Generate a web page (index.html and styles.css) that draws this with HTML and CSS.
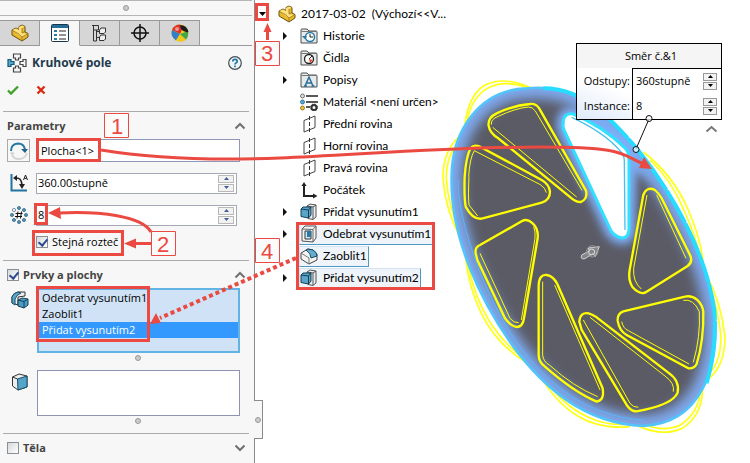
FILE: index.html
```html
<!DOCTYPE html>
<html lang="cs">
<head>
<meta charset="utf-8">
<title>Kruhové pole</title>
<link rel="stylesheet" href="styles.css">
</head>
<body>
<svg class="defs" aria-hidden="true">
  <defs>
    <symbol id="part" viewBox="0 0 18 18">
      <path d="M1 6 5 4 8 5.500V2.500L11 1l3 1.500V8l3 1.500V13l-6 4L1 11z" fill="#e9b92c" stroke="#6d5312" stroke-linejoin="round"/>
      <path d="M1.500 6 5 4.500 8 6V3L11 1.500l2.500 1L11 4v5l5.500 1-5.500 3L8 11z" fill="#ffe07a"/>
      <path d="M11 4v5l3-1.500M1.500 6.500 8 10l3 3v3.500M11 13l5.500-3" fill="none" stroke="#8d6d1c" stroke-width=".7"/>
    </symbol>
    <symbol id="extrude" viewBox="0 0 18 18">
      <path d="M7 3 10 1l6 1v12l-3 2.500-5-1z" fill="#eceded" stroke="#555"/>
      <path d="M13 4v12M7 3l6 1 3-2" fill="none" stroke="#555"/>
      <path d="M1 6l2-2h8v8l-2.500 3L1 13.500z" fill="#5ba4c8" stroke="#123f57"/>
      <path d="M1 6l7.500 1L11 4M8.500 7v8" fill="none" stroke="#123f57"/>
    </symbol>
    <symbol id="cut" viewBox="0 0 18 18">
      <path d="M2 4 5 1h11v12l-3 4-11-1z" fill="#f4f4f4" stroke="#555"/>
      <path d="M2 4l11 .5L16 1M13 4.500V17" fill="none" stroke="#666"/>
      <path d="M5 6h6v8H5z" fill="#d5e8f2" stroke="#333"/><path d="M7 6h4v6H7z" fill="#247ba8"/>
    </symbol>
    <symbol id="fillet" viewBox="0 0 18 18">
      <path d="M1 6 8 2l5 1 4 4v6l-8 4-8-5z" fill="#f3f3f3" stroke="#444" stroke-linejoin="round"/>
      <path d="M6 3l2-1 5 1q4 2 4 6l-6 2q0-5-5-8z" fill="#65acd0" stroke="#184860"/>
      <path d="M1 6l8 5v6" fill="none" stroke="#777"/>
    </symbol>
    <symbol id="plane" viewBox="0 0 18 18">
      <path d="M4 5.500 15 1v11.500L4 17z" fill="#fff" stroke="#444"/><path d="M9.500 1v16" stroke="#333" stroke-dasharray="4 2"/>
    </symbol>
    <symbol id="folder" viewBox="0 0 18 18">
      <path d="M1 16V3q0-1 1-1h5l2 2h7q1 0 1 1v11z" fill="#e7e9eb" stroke="#4a4f52"/><path d="M1.500 4.500h15" stroke="#777"/>
    </symbol>
    <symbol id="up" viewBox="0 0 12 8"><path d="M1.500 6.500 6 2l4.500 4.500" fill="none" stroke="#707070" stroke-width="2"/></symbol>
    <symbol id="down" viewBox="0 0 12 8"><path d="M1.500 1.500 6 6l4.500-4.500" fill="none" stroke="#707070" stroke-width="2"/></symbol>
    <symbol id="right" viewBox="0 0 6 8"><path d="M1 0 5 4 1 8z" fill="#111"/></symbol>
    <symbol id="tri-up" viewBox="0 0 5 3"><path d="M0 3 2.500 0 5 3z" fill="currentColor"/></symbol>
    <symbol id="tri-down" viewBox="0 0 5 3"><path d="M0 0h5L2.500 3z" fill="currentColor"/></symbol>
  </defs>
</svg>

<div class="app">
  <aside class="panel">
    <div class="grip"><i class="dot"></i></div>
    <nav class="tabs">
      <button class="tab" aria-label="Strom"><svg width="18" height="18"><use href="#part"/></svg></button>
      <button class="tab tab-active" aria-label="Vlastnosti"><svg width="18" height="18" viewBox="0 0 18 18"><rect x=".5" y=".5" width="17" height="17" rx="1" fill="#fff" stroke="#17364a"/><path d="M1 1h16v3H1z" fill="#256d96"/><path d="M3 6h3v2H3zM3 10h3v2H3zM3 14h3v2H3z" fill="#2b7aa5"/><path d="M8 7h7M8 11h7M8 15h7" stroke="#222"/></svg></button>
      <button class="tab" aria-label="Konfigurace"><svg width="18" height="18" viewBox="0 0 18 18"><path d="M2.500 1v16M5.500 6v11M2.500 17h3M1 1.500h6.500V6H3" fill="none" stroke="#333"/><path d="M5.500 7.500H9M5.500 13.500H9" stroke="#333"/><path d="M8.500 6l1.500-2h4.500v4L13 9.500H8.500zM8.500 13l1.500-2h4.500v4L13 16.500H8.500z" fill="#eee" stroke="#333"/></svg></button>
      <button class="tab" aria-label="Kóty"><svg width="18" height="18" viewBox="0 0 18 18"><circle cx="9" cy="9" r="6" fill="none" stroke="#111" stroke-width="1.500"/><path d="M9 0v18M0 9h18" stroke="#111" stroke-width="1.500"/></svg></button>
      <button class="tab" aria-label="Vzhled"><svg width="18" height="18" viewBox="0 0 18 18"><circle cx="9" cy="9" r="8.500" fill="#f5d22a"/><path d="M9 10 1 6A8.500 8.500 0 0 1 9 .5q4 4 0 9.500z" fill="#dc3326"/><path d="M9 10 1 6q-2 6 4 10.500z" fill="#317fc7"/><path d="M9 10 5 16.500q7 3 10.500-1.500z" fill="#f0c71e"/><path d="M9 10Q15 8 17 7q1 5-2 8.500z" fill="#43a747"/><path d="M9 1q7 0 8.500 7Q13 9 10 5z" fill="#1b1b1b"/><circle cx="6" cy="5" r="2" fill="#fff" opacity=".5"/></svg></button>
    </nav>

    <header class="title">
      <svg width="20" height="20" viewBox="0 0 20 20" fill="#f7f7f7" stroke="#444" stroke-width="1.200"><path d="M6.500 1h7v4h-2v2h-3V5h-2zM6.500 19h7v-4h-2v-2h-3v2h-2zM19 6.500v7h-3v-2h-3v-3h3v-2z"/><path d="M1 6.500h3v2h3v3H4v2H1z" fill="#57a7cc" stroke="#155777"/></svg>
      <h1>Kruhové pole</h1>
      <button class="plain help" aria-label="Nápověda"><svg width="14" height="14" viewBox="0 0 14 14"><circle cx="7" cy="7" r="6.300" fill="#eef5f9" stroke="#454d53" stroke-width="1.200"/><path d="M4.800 5.500q0-2.200 2.200-2.200t2.200 1.900q0 1.200-1.200 1.800-1 .5-1 1.500M7 9.500v1.700" fill="none" stroke="#2374a0" stroke-width="1.700"/></svg></button>
    </header>
    <div class="confirm">
      <button class="plain" aria-label="OK"><svg width="12" height="10" viewBox="0 0 12 10"><path d="M1 5.500 4 8.500 11 1.500" fill="none" stroke="#3fa32b" stroke-width="2.400"/></svg></button>
      <button class="plain" aria-label="Zrušit"><svg width="10" height="10" viewBox="0 0 10 10"><path d="M1.500 1.500 8.500 8.500M8.500 1.500 1.500 8.500" stroke="#d92b10" stroke-width="2.400"/></svg></button>
    </div>

    <section class="group params">
      <div class="group-head"><h2>Parametry</h2><button class="plain" aria-label="Sbalit parametry"><svg width="12" height="8"><use href="#up"/></svg></button></div>
      <div class="row">
        <button class="axis" aria-label="Obrátit směr"><svg width="18" height="18" viewBox="0 0 18 18"><path d="M1 9q0-7 7-7.500 6 0 7 6" fill="none" stroke="#2677a1" stroke-width="2"/><path d="M11 7h7l-3 4z" fill="#1f6187"/><path d="M17 11q-2 6-8 6-6 0-7-5" fill="none" stroke="#d5d5d5" stroke-width="2"/><path d="M0 12h5l-3-3z" fill="#d5d5d5"/></svg></button>
        <div class="field field-wide"><input aria-label="Osa pole" value="Plocha&lt;1&gt;"></div>
      </div>
      <div class="row">
        <span class="ico"><svg width="18" height="18" viewBox="0 0 18 18"><path d="M1.500 0v16.500H17" fill="none" stroke="#2173a0" stroke-width="2"/><path d="M5 4q7-1 7 8" fill="none" stroke="#222" stroke-width="1.500"/><path d="M3 4l4-3v6zM9 10h6l-3 5z" fill="#222"/><path d="M13.500 6 15.500 1l2 5M14.500 4.500h2" fill="none" stroke="#222"/></svg></span>
        <div class="field"><input aria-label="Úhel" value="360.00stupně"><span class="spin"><button aria-label="Více"><svg width="5" height="3"><use href="#tri-up"/></svg></button><button aria-label="Méně"><svg width="5" height="3"><use href="#tri-down"/></svg></button></span></div>
      </div>
      <div class="row">
        <span class="ico"><svg width="18" height="18" viewBox="0 0 18 18" fill="#4d93b7" stroke="#1c526f" stroke-width=".6"><circle cx="9" cy="2" r="1.600"/><circle cx="14" cy="4" r="1.600"/><circle cx="16" cy="9" r="1.600"/><circle cx="14" cy="14" r="1.600"/><circle cx="9" cy="16" r="1.600"/><circle cx="4" cy="14" r="1.600"/><circle cx="2" cy="9" r="1.600"/><circle cx="4" cy="4" r="1.600" fill="#fff"/><path d="M8 5.500 7 12.500M11.500 5.500l-1 7M5.500 7.500h7M5 10.500h7" stroke="#111" stroke-width="1"/></svg></span>
        <div class="field"><input aria-label="Počet instancí" value="8"><span class="spin"><button aria-label="Více"><svg width="5" height="3"><use href="#tri-up"/></svg></button><button aria-label="Méně"><svg width="5" height="3"><use href="#tri-down"/></svg></button></span></div>
      </div>
      <label class="check indent"><input type="checkbox" checked>Stejná rozteč</label>
    </section>

    <section class="group features">
      <div class="group-head"><h2><label class="check"><input type="checkbox" checked>Prvky a plochy</label></h2><button class="plain" aria-label="Sbalit prvky"><svg width="12" height="8"><use href="#up"/></svg></button></div>
      <div class="row row-top">
        <span class="ico"><svg width="18" height="18" viewBox="0 0 18 18"><path d="M1 12V6q1-4 6-5h7v4l-7 1v8z" fill="#eee" stroke="#333"/><path d="M1 6q1-4 6-5l3 1Q5 4 4 8v6l-3-2z" fill="#5da7ca" stroke="#174c66"/><path d="M7 9l4-2 6 1v6l-4 3-6-2z" fill="#4c9bc2" stroke="#133f57"/><path d="M7 9l6 1.500L17 8M13 10.500V17" fill="none" stroke="#133f57"/></svg></span>
        <ul class="list list-active" role="listbox" aria-label="Prvky">
          <li role="option">Odebrat vysunutím1</li>
          <li role="option">Zaoblit1</li>
          <li role="option" aria-selected="true" class="sel">Přidat vysunutím2</li>
        </ul>
      </div>
      <i class="dot"></i>
      <div class="row row-top">
        <span class="ico"><svg width="18" height="18" viewBox="0 0 18 18"><path d="M1.500 4 8 1l8 2v11l-9 3-5.500-4z" fill="#eee" stroke="#333" stroke-linejoin="round"/><path d="M6.500 6 16 3v11l-9 3z" fill="#55a5ca" stroke="#174d68"/><path d="M1.500 4l5 2" stroke="#333"/></svg></span>
        <ul class="list list-empty" role="listbox" aria-label="Plochy"></ul>
      </div>
      <i class="dot"></i>
    </section>

    <section class="group bodies">
      <div class="group-head"><h2><label class="check"><input type="checkbox">Těla</label></h2><button class="plain" aria-label="Rozbalit těla"><svg width="12" height="8"><use href="#down"/></svg></button></div>
    </section>
    <button class="handle" aria-label="Skrýt panel"><i class="dot"></i></button>
  </aside>

  <main class="view">
    <svg class="model" width="750" height="463" viewBox="0 0 750 463" aria-hidden="true">
      <defs>
        <filter id="blur" x="-20%" y="-20%" width="140%" height="140%"><feGaussianBlur stdDeviation="18"/></filter>
        <filter id="blur-s" x="-40%" y="-40%" width="180%" height="180%"><feGaussianBlur stdDeviation="12"/></filter>
        <path id="rim" d="M65 320C66 180 150 60 290 55C430 40 520 120 620 235C740 385 830 560 853 720C870 900 810 1060 640 1068C460 1060 340 950 250 830C150 690 60 500 65 320z"/>
        <path id="rim-bright" d="M340 55C450 55 520 120 620 235C740 385 830 560 853 720Q862 830 830 940"/>
        <clipPath id="disc"><use href="#rim"/></clipPath>
        <path id="slot" d="M400 155Q402 128 430 132Q520 170 583 232Q597 245 597 265V480Q594 504 577 504Q558 502 543 483L402 180Q397 170 400 155z"/>
      </defs>
      <g transform="translate(430 70) scale(.3333)" fill="none" stroke-linejoin="round">
        <g stroke="#ffff14" stroke-width="5">
          <path d="M105 162Q115 80 160 48Q220 15 305 55M92 197Q38 240 39 325Q45 420 95 510M105 545Q115 670 175 768Q220 835 285 875M328 912Q385 1015 470 1052Q530 1077 600 1070M628 1070Q700 1100 755 1076Q815 1040 818 960M833 928Q885 890 885 800Q875 700 828 612M640 246Q730 315 775 420Q812 505 820 578"/>
          <path d="M112 150Q125 85 170 56Q220 28 290 52M88 215Q49 255 49 325Q55 415 97 500M112 570Q130 680 186 766Q230 830 285 868M345 925Q395 1005 475 1042Q530 1067 585 1063M640 1062Q700 1088 750 1066Q805 1030 811 965M835 912Q872 880 873 800Q865 715 835 640M660 270Q725 330 763 423Q800 505 809 560"/>
        </g>
        <g clip-path="url(#disc)">
          <use href="#rim" fill="#5b5b66"/>
          <use href="#rim" stroke="#7fa9ee" stroke-width="64" filter="url(#blur)"/>
          <path d="M520 110Q640 210 690 340L610 300 600 420V250Q530 170 450 130z" fill="#78a7ea" filter="url(#blur-s)"/>
          <use href="#slot" stroke="#7fb2ff" stroke-width="38" filter="url(#blur-s)"/>
          <path d="M84 330C84 460 165 680 262 820C350 940 470 1040 640 1050" stroke="#55b8ff" stroke-width="3"/>
        </g>
        <use href="#rim" stroke="#52c4fb" stroke-width="8"/>
        <use href="#rim-bright" stroke="#28dcff" stroke-width="12" stroke-dasharray="190 4 110 3"/>
        <use href="#slot" fill="#fff" stroke="#33dfff" stroke-width="9"/>
        <path d="M425 142Q520 185 570 242Q582 254 583 270L585 480" stroke="#48bff2" stroke-width="4"/>
        <g stroke="#ff0" stroke-width="7">
          <path d="M176 168Q172 143 200 130Q250 106 300 102Q318 100 328 116L468 362Q474 386 453 396Q440 397 425 385L205 205Q180 190 176 168z"/>
          <path d="M104 320Q108 260 122 234Q132 222 150 230L335 330Q357 342 360 365Q360 390 335 398L155 446Q128 450 107 410Q102 380 104 320z"/>
          <path d="M137 550Q134 532 150 525L275 454Q292 444 308 460Q326 476 323 505L282 745Q278 770 262 771Q244 770 225 745L142 570z"/>
          <path d="M640 375Q650 348 675 360Q688 372 695 385L780 555Q790 575 773 588L645 668Q628 674 608 652Q594 632 599 600z"/>
          <path d="M326 645Q328 612 350 615Q370 618 382 642L518 955Q524 992 500 995Q430 965 345 890Q326 876 326 855z"/>
          <path d="M448 755Q450 726 476 730Q485 732 500 742L715 908Q750 932 743 968Q728 1005 620 1024Q604 1025 590 1005L455 780z"/>
          <path d="M563 752Q562 730 580 724L765 680Q784 675 801 689Q818 705 820 725Q822 810 800 882Q792 897 775 895L590 795Q568 783 563 752z"/>
        </g>
        <g stroke="#ff0" stroke-width="3">
          <path d="M184 164Q182 147 205 139Q255 115 295 111Q307 110 316 123L456 361M188 172L440 381M116 320Q119 265 133 242L331 344Q347 354 349 368M117 320Q114 380 117 405L143 438"/>
          <path d="M150 550L240 745Q252 760 266 758M311 470Q317 485 315 505L274 750M651 375L611 595Q608 635 634 657M680 375L768 565M338 635V855Q340 875 358 885Q430 950 503 980M374 645L510 960M460 750L600 1000Q608 1012 625 1012M480 742L705 918Q735 940 730 965M575 755Q580 776 595 782L777 882M760 691Q790 685 808 725Q812 800 790 877"/>
        </g>
        <path d="M455 555L478 543 475 534 508 530 496 560 488 551 465 566Q450 570 455 555z" fill="#85858c" stroke="#cfcfcf" stroke-width="3"/>
        <circle cx="485" cy="546" r="9" stroke="#ddd" stroke-width="3"/><circle cx="487" cy="544" r="17" stroke="#999" stroke-width="3"/>
      </g>
    </svg>

    <ul class="tree">
      <li class="node root"><svg class="tw" width="7" height="4" viewBox="0 0 7 4"><path d="M0 0h7L3.500 4z"/></svg><span class="entry"><svg width="18" height="18"><use href="#part"/></svg>2017-03-02&nbsp; (Výchozí&lt;&lt;V...</span></li>
      <li class="node"><svg class="tw" width="6" height="8"><use href="#right"/></svg><span class="entry"><svg width="18" height="18" viewBox="0 0 18 18"><use href="#folder"/><circle cx="10" cy="10" r="4.500" fill="#fff" stroke="#277aa6" stroke-width="1.500"/><path d="M10 7v3h3" fill="none" stroke="#222"/><path d="M2 9h5l-2.500 3z" fill="#277aa6"/></svg>Historie</span></li>
      <li class="node"><span class="entry"><svg width="18" height="18" viewBox="0 0 18 18"><use href="#folder"/><circle cx="9" cy="10" r="4.500" fill="#fff" stroke="#222" stroke-width="1.300"/><path d="M9 10l3-3" stroke="#222"/><path d="M9 10l4 1-3 3z" fill="#e2462c"/></svg>Čidla</span></li>
      <li class="node"><svg class="tw" width="6" height="8"><use href="#right"/></svg><span class="entry"><svg width="18" height="18" viewBox="0 0 18 18"><use href="#folder"/><path d="M5 15 9 6l4 9M6.500 12h5M4 15h3M11.500 15h3" fill="none" stroke="#266f98" stroke-width="1.500"/></svg>Popisy</span></li>
      <li class="node"><span class="entry"><svg width="18" height="18" viewBox="0 0 18 18"><circle cx="2.500" cy="3" r="2" fill="#ddd" stroke="#555" stroke-width=".8"/><circle cx="2.500" cy="9" r="2" fill="#54acdc" stroke="#246080" stroke-width=".8"/><circle cx="2.500" cy="15" r="2" fill="#f5c52e" stroke="#7c661d" stroke-width=".8"/><path d="M6 3h12M6 9h12M6 14h4" stroke="#222" stroke-width="1.500"/><circle cx="14" cy="14.500" r="2.500" fill="none" stroke="#333" stroke-width="2"/><circle cx="14" cy="14.500" r="3.500" fill="none" stroke="#333" stroke-dasharray="1.400 1.350"/></svg>Materiál &lt;není určen&gt;</span></li>
      <li class="node"><span class="entry"><svg width="18" height="18"><use href="#plane"/></svg>Přední rovina</span></li>
      <li class="node"><span class="entry"><svg width="18" height="18"><use href="#plane"/></svg>Horní rovina</span></li>
      <li class="node"><span class="entry"><svg width="18" height="18"><use href="#plane"/></svg>Pravá rovina</span></li>
      <li class="node"><span class="entry"><svg width="18" height="18" viewBox="0 0 18 18"><path d="M4 3v12h11" fill="none" stroke="#222" stroke-width="2"/><path d="M1.500 5 4 1l2.500 4zM13 12.500l4.500 2.500-4.500 2.500z" fill="#222"/></svg>Počátek</span></li>
      <li class="node"><svg class="tw" width="6" height="8"><use href="#right"/></svg><span class="entry"><svg width="18" height="18"><use href="#extrude"/></svg>Přidat vysunutím1</span></li>
      <li class="node"><svg class="tw" width="6" height="8"><use href="#right"/></svg><span class="entry picked"><svg width="18" height="18"><use href="#cut"/></svg>Odebrat vysunutím1</span></li>
      <li class="node"><span class="entry picked"><svg width="18" height="18"><use href="#fillet"/></svg>Zaoblit1</span></li>
      <li class="node"><svg class="tw" width="6" height="8"><use href="#right"/></svg><span class="entry picked"><svg width="18" height="18"><use href="#extrude"/></svg>Přidat vysunutím2</span></li>
    </ul>

    <div class="callout">
      <div class="callout-title">Směr č.&amp;1</div>
      <label class="callout-label" for="spacing">Odstupy:</label>
      <div class="callout-field"><input id="spacing" value="360stupně"><span class="spin"><button aria-label="Více"><svg width="5" height="3"><use href="#tri-up"/></svg></button><button aria-label="Méně"><svg width="5" height="3"><use href="#tri-down"/></svg></button></span></div>
      <label class="callout-label" for="count">Instance:</label>
      <div class="callout-field"><input id="count" value="8"><span class="spin"><button aria-label="Více"><svg width="5" height="3"><use href="#tri-up"/></svg></button><button aria-label="Méně"><svg width="5" height="3"><use href="#tri-down"/></svg></button></span></div>
    </div>
  </main>

  <svg class="notes" width="750" height="463" viewBox="0 0 750 463">
    <g fill="#fff" fill-opacity=".7" stroke="#111"><path d="M649 119 636 149"/><circle cx="649" cy="118.500" r="3"/><circle cx="636" cy="149.500" r="3"/></g>
    <path d="M706.500 131.500 711.500 127l5 4.500" fill="none" stroke="#777" stroke-width="2"/>
    <g fill="none" stroke="#ea4a41" stroke-width="3">
      <path d="M37.500 139.500h62v21h-62zM35.500 204.500h11v19h-11zM33.500 231.500h89v23h-89zM37.500 287.500h111v53h-111zM256.500 4.500h11v15h-11zM297.500 223.500h136v65h-136z"/>
      <path d="M101 150C150 158 205 161 280 158S450 147 540 147S620 155 644 164M151 232C142 216 100 211 59 213M151 243.500h-16M267.500 40V30"/>
      <path d="M296 258 160 318" stroke-width="4" stroke-dasharray="4 3"/>
    </g>
    <path d="M652 169l-13-1 5-11zM48 213l12-6 1 12zM124 243.500l12-5v10zM267.500 23l4 9h-8zM150 324l6-11 5 10z" fill="#ea4a41"/>
    <g fill="#fbfbfb" stroke="#ea4a41"><path d="M104.500 113.500h24v24h-24zM151.500 231.500h24v24h-24zM255.500 41.500h24v24h-24zM255.500 238.500h24v24h-24z"/></g>
    <g class="num"><text x="117" y="134">1</text><text x="163" y="252">2</text><text x="267" y="61">3</text><text x="267" y="259">4</text></g>
  </svg>
</div>
</body>
</html>
```
FILE: styles.css
```css
* { box-sizing: border-box; }
body {
  margin: 0;
  background: #fff;
  color: #000;
  font: 11px/16px "Open Sans", "Noto Sans", sans-serif;
}
.defs { position: absolute; width: 0; height: 0; }
h1, h2, ul { margin: 0; padding: 0; }
ul { list-style: none; }
svg { display: block; flex: none; }
button, input { font: inherit; color: inherit; }
button { padding: 0; }
.plain { border: 0; background: none; }

.app { position: relative; display: flex; min-height: 100vh; }
.panel {
  position: relative;
  flex: 0 0 255px;
  background: #f7f7f7;
  border-right: 1px solid #8b8b8b;
}
.dot {
  display: block;
  width: 6px;
  height: 6px;
  border: 1px solid #999;
  border-radius: 50%;
  background: #ccc;
}
.grip {
  display: flex;
  align-items: center;
  justify-content: center;
  height: 16px;
  margin-right: 2px;
  border: solid #b5b5b5;
  border-width: 1px 0;
}
.tabs {
  display: flex;
  height: 26px;
  margin: 4px 2px 0 0;
  box-shadow: inset 0 -1px #999;
}
.tab {
  display: grid;
  place-items: center;
  width: 40px;
  border: 1px solid #999;
  border-left: 0;
  background: #d6d6d6;
}
.tab-active { background: #f7f7f7; border-bottom-color: #f7f7f7; }
.title {
  display: flex;
  align-items: center;
  gap: 5px;
  height: 34px;
  padding: 0 12px 0 7px;
}
.title h1 { font-size: 12px; color: #233a4d; }
.help { margin-left: auto; }
.confirm { display: flex; align-items: center; gap: 17px; height: 20px; padding-left: 7px; }

.group { margin: 0 5px 0 3px; border-top: 1px solid #aaa; }
.params { height: 149px; margin-top: 11px; }
.features { height: 173px; }
.group-head {
  display: flex;
  align-items: center;
  justify-content: space-between;
  height: 27px;
  padding: 0 3px 0 4px;
}
.group-head h2 { font-size: 11px; color: #444; }
.check { display: flex; align-items: center; gap: 4px; }
.check input {
  appearance: none;
  width: 12px;
  height: 12px;
  margin: 0;
  border: 1px solid #8a8f94;
  background: linear-gradient(135deg, #d5d9dc, #fff);
}
.check input:checked::before {
  content: "";
  display: block;
  width: 4px;
  height: 7px;
  margin: 0 3px;
  border: solid #304a92;
  border-width: 0 2px 2px 0;
  transform: rotate(40deg);
}
.indent { height: 12px; padding-left: 33px; }
.row { display: flex; align-items: center; gap: 6px; height: 23px; margin: 0 9px 10px 4px; }
.params .row + .row { height: 22px; }
.axis { display: grid; place-items: center; flex: none; width: 23px; height: 23px; border: 1px solid #aaa; background: #f7f7f7; }
.ico { display: grid; place-items: center; flex: 0 0 23px; }
.field {
  display: flex;
  align-items: center;
  flex: 1;
  min-width: 0;
  height: 21px;
  margin-right: 3px;
  padding-right: 2px;
  border: 1px solid #a5a8b5;
  background: #fff;
}
.field-wide { height: 23px; margin-right: 0; border-color: #8f98b5; }
.field input, .callout input {
  flex: 1;
  width: 0;
  min-width: 0;
  padding: 0 0 0 1px;
  border: 0;
  background: none;
}
.field-wide input { padding-left: 4px; }
.spin { display: grid; gap: 1px; flex: none; color: #435a9b; }
.spin button { display: grid; place-items: center; width: 16px; height: 8px; border: 1px solid #b9b9b9; background: #f2f2f2; }
.row-top { align-items: flex-start; height: auto; margin: 0 9px 2px 5px; }
.row-top .ico { padding-top: 3px; }
.list { flex: 1; border: 1px solid #8d93b0; background: #fff; }
.list-active { height: 65px; border: 2px solid #62b4e5; background: #d0e3f6; }
.list li { padding-left: 3px; }
.list .sel { background: #3399ff; color: #fff; }
.list-empty { height: 46px; }
.features > .dot { margin: 2px auto 0 132px; }
.features > .dot + .row { margin-top: 9px; }
.handle {
  position: absolute;
  left: 254px;
  top: 400px;
  display: grid;
  place-items: center;
  width: 9px;
  height: 39px;
  border: 1px solid #8b8b8b;
  border-left: 0;
  background: #f7f7f7;
}

.view { flex: 1; min-width: 0; }
.model { position: absolute; left: 0; top: 0; }
.tree { position: relative; width: 200px; padding-top: 3px; font-family: Lato, "Open Sans", sans-serif; font-size: 12px; }
.node { position: relative; display: flex; align-items: center; height: 22px; padding-left: 44px; white-space: nowrap; }
.root { padding-left: 22px; }
.tw { position: absolute; left: 27px; }
.root .tw { left: 4px; }
.entry { display: flex; align-items: center; gap: 5px; height: 21px; padding-right: 1px; border: 1px solid transparent; }
.picked { background: #eef4fa; border-color: #d5e4f0 #4f98c4 #4f98c4 #d5e4f0; }

.callout {
  position: absolute;
  left: 576px;
  top: 43px;
  display: grid;
  grid-template: 24px 25px 26px / 55px 89px;
  border: 1px solid #000;
  background: linear-gradient(20deg, #dfeafa, #fff 35%);
}
.callout-title { grid-column: 1 / 3; background: #f5f5f5; text-align: center; line-height: 24px; padding-left: 4px; }
.callout-label { padding-right: 2px; text-align: right; line-height: 25px; }
.callout-field { display: flex; align-items: center; padding: 0 4px 0 2px; border-left: 1px solid #000; background: #fff; }
.callout-title + .callout-label + .callout-field { border-top: 1px solid #000; }
.callout .spin { color: #000; }
.callout .spin button { width: 14px; border-color: #999; }

.notes { position: absolute; left: 0; top: 0; pointer-events: none; }
.num { fill: #ea4a41; font: 22px "Liberation Sans", Arial, sans-serif; text-anchor: middle; }
```
